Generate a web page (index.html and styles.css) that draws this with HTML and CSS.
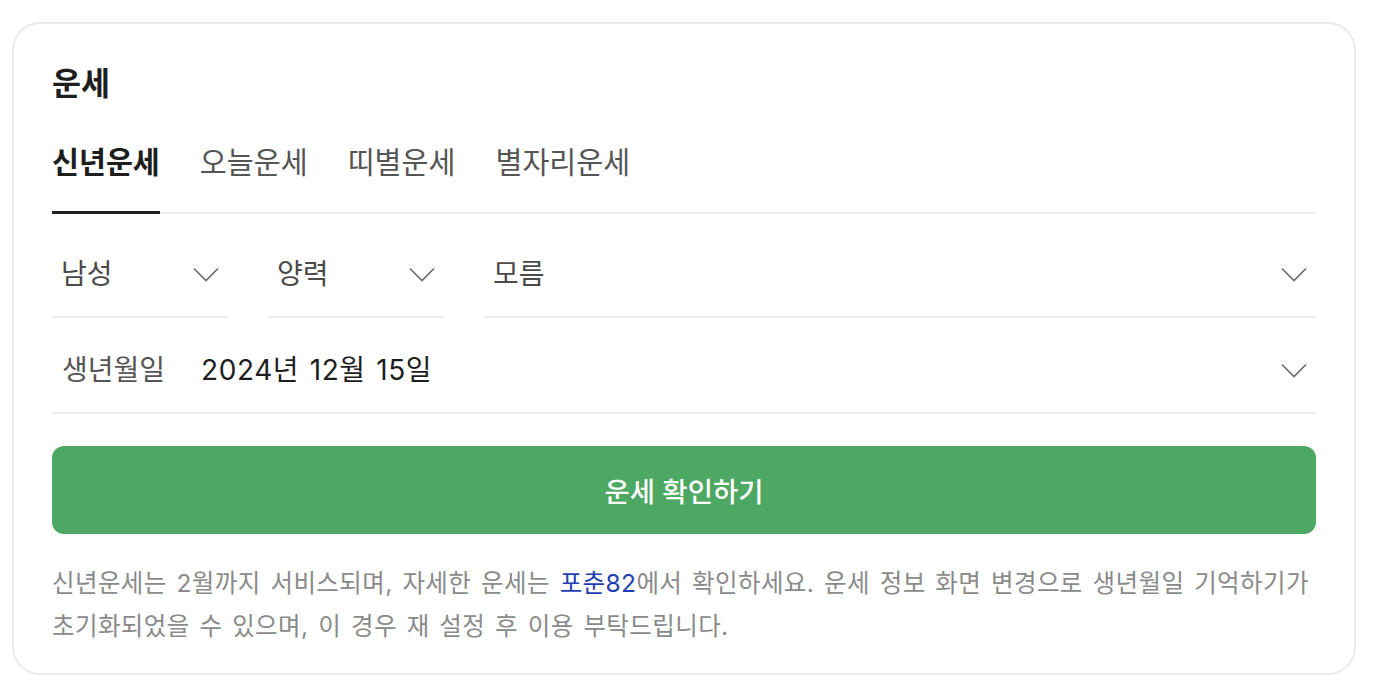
FILE: index.html
```html
<!DOCTYPE html>
<html lang="ko">
<head>
<meta charset="utf-8">
<title>운세</title>
<link rel="stylesheet" href="styles.css">
</head>
<body>
<section class="card">
  <h2 class="title">운세</h2>
  <nav class="tabs">
    <a class="tab active">신년운세</a>
    <a class="tab">오늘운세</a>
    <a class="tab">띠별운세</a>
    <a class="tab">별자리운세</a>
  </nav>
  <div class="row row-top">
    <div class="field">
      <span class="val">남성</span>
      <svg class="chev" viewBox="0 0 26 15"><polyline points="1,1.5 13,13.5 25,1.5"/></svg>
    </div>
    <div class="field">
      <span class="val">양력</span>
      <svg class="chev" viewBox="0 0 26 15"><polyline points="1,1.5 13,13.5 25,1.5"/></svg>
    </div>
    <div class="field">
      <span class="val">모름</span>
      <svg class="chev" viewBox="0 0 26 15"><polyline points="1,1.5 13,13.5 25,1.5"/></svg>
    </div>
  </div>
  <div class="row row-date">
    <div class="field">
      <span class="label">생년월일</span>
      <span class="date">2024년 12월 15일</span>
      <svg class="chev" viewBox="0 0 26 15"><polyline points="1,1.5 13,13.5 25,1.5"/></svg>
    </div>
  </div>
  <button class="submit">운세 확인하기</button>
  <p class="note">신년운세는 2월까지 서비스되며, 자세한 운세는 <a class="link">포춘82</a>에서 확인하세요. 운세 정보 화면 변경으로 생년월일 기억하기가 초기화되었을 수 있으며, 이 경우 재 설정 후 이용 부탁드립니다.</p>
</section>
</body>
</html>
```
FILE: styles.css
```css
* { box-sizing: border-box; }
html, body { margin: 0; padding: 0; background: #fff; }
body {
  font-family: Inter, "Noto Sans CJK KR", sans-serif;
  color: #222;
}
.card {
  margin: 22px 20px 0 12px;
  border: 2px solid #ebebeb;
  border-radius: 28px;
  padding: 40px 38px 25px 38px;
}
.title {
  margin: 0;
  font-size: 31.5px;
  line-height: 40px;
  font-weight: 700;
  color: #1e1e1e;
}
.tabs {
  display: flex;
  gap: 40px;
  margin-top: 39px;
  border-bottom: 2px solid #efefef;
}
.tab {
  font-size: 29.3px;
  line-height: 40px;
  padding-bottom: 28px;
  color: #555;
  border-bottom: 3px solid transparent;
  margin-bottom: -2px;
}
.tab.active {
  color: #1e1e1e;
  font-weight: 700;
  border-bottom-color: #222;
}
.row {
  display: grid;
  gap: 40px;
}
.row-top {
  margin-top: 18px;
  grid-template-columns: 176px 176px 1fr;
}
.row-date {
  margin-top: 10px;
  grid-template-columns: 1fr;
}
.field {
  height: 86px;
  display: flex;
  align-items: center;
  padding: 0 9px 0 9px;
  border-bottom: 2px solid #ebebeb;
  font-size: 28px;
  line-height: 40px;
}
.val { color: #4a4a4a; flex: 1; }
.label { color: #555; width: 140px; padding-left: 1px; }
.date { color: #1e1e1e; flex: 1; letter-spacing: 0.6px; word-spacing: 2px; }
.chev {
  width: 26px;
  height: 15px;
  fill: none;
  stroke: #6a6a6a;
  stroke-width: 1.6;
}
.submit {
  display: block;
  width: 100%;
  height: 88px;
  margin-top: 32px;
  border: 0;
  border-radius: 12px;
  background: #4ca862;
  color: #fff;
  font-family: inherit;
  font-size: 27.5px;
  font-weight: 500;
}
.note {
  margin: 28px 0 0;
  font-size: 24.5px;
  line-height: 43px;
  letter-spacing: 0.4px;
  word-spacing: 2.5px;
  color: #8a8a8a;
}
.link { color: #1f3fb5; }
```
